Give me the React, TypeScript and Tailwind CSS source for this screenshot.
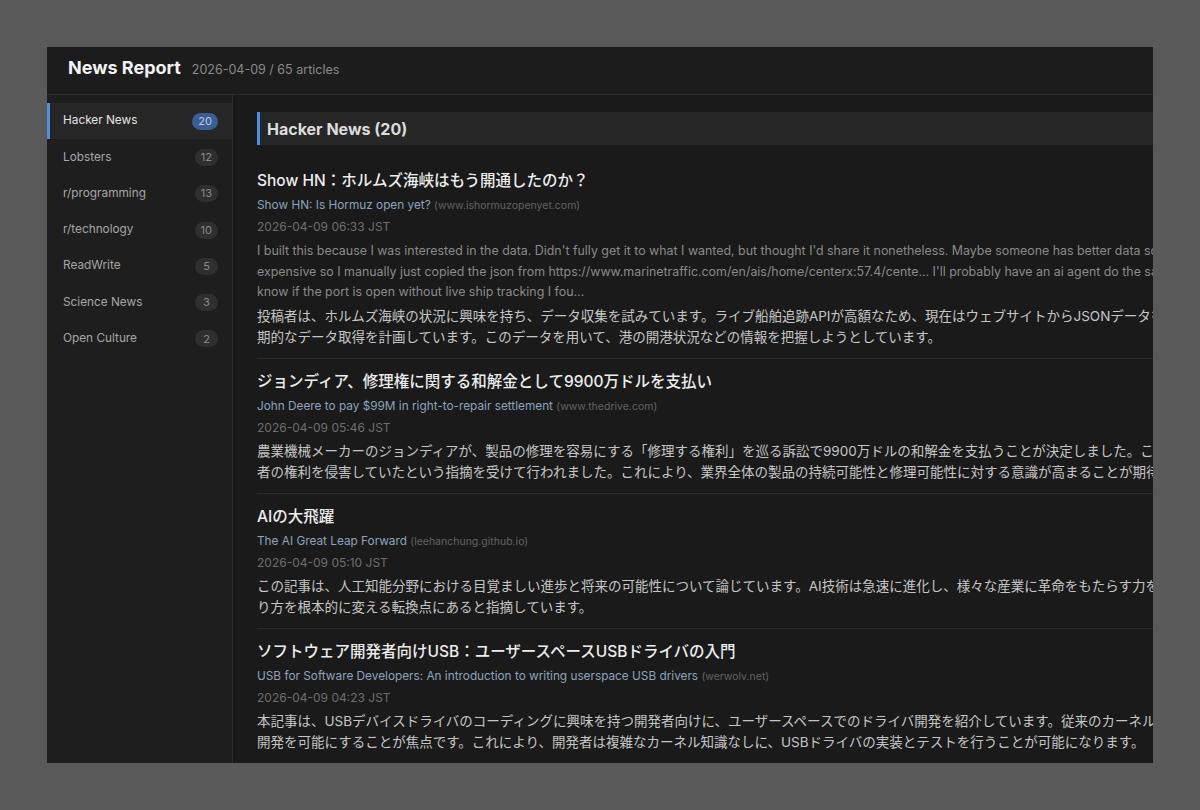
import React from "react";

type Source = { name: string; count: number };

const sources: Source[] = [
  { name: "Hacker News", count: 20 },
  { name: "Lobsters", count: 12 },
  { name: "r/programming", count: 13 },
  { name: "r/technology", count: 10 },
  { name: "ReadWrite", count: 5 },
  { name: "Science News", count: 3 },
  { name: "Open Culture", count: 2 },
];

type Article = {
  title: string;
  original: string;
  domain: string;
  date: string;
  excerpt?: string[];
  summary: string[];
};

const articles: Article[] = [
  {
    title: "Show HN：ホルムズ海峡はもう開通したのか？",
    original: "Show HN: Is Hormuz open yet?",
    domain: "www.ishormuzopenyet.com",
    date: "2026-04-09 06:33 JST",
    excerpt: [
      "I built this because I was interested in the data. Didn't fully get it to what I wanted, but thought I'd share it nonetheless. Maybe someone has better data sources for this, the APIs are",
      "expensive so I manually just copied the json from https://www.marinetraffic.com/en/ais/home/centerx:57.4/cente... I'll probably have an ai agent do the same thing periodically, since it's hard to",
      "know if the port is open without live ship tracking I fou...",
    ],
    summary: [
      "投稿者は、ホルムズ海峡の状況に興味を持ち、データ収集を試みています。ライブ船舶追跡APIが高額なため、現在はウェブサイトからJSONデータを手動でコピーしており、今後はAIエージェントによる定",
      "期的なデータ取得を計画しています。このデータを用いて、港の開港状況などの情報を把握しようとしています。",
    ],
  },
  {
    title: "ジョンディア、修理権に関する和解金として9900万ドルを支払い",
    original: "John Deere to pay $99M in right-to-repair settlement",
    domain: "www.thedrive.com",
    date: "2026-04-09 05:46 JST",
    summary: [
      "農業機械メーカーのジョンディアが、製品の修理を容易にする「修理する権利」を巡る訴訟で9900万ドルの和解金を支払うことが決定しました。この和解は、同社が修理を制限し消費",
      "者の権利を侵害していたという指摘を受けて行われました。これにより、業界全体の製品の持続可能性と修理可能性に対する意識が高まることが期待されています。",
    ],
  },
  {
    title: "AIの大飛躍",
    original: "The AI Great Leap Forward",
    domain: "leehanchung.github.io",
    date: "2026-04-09 05:10 JST",
    summary: [
      "この記事は、人工知能分野における目覚ましい進歩と将来の可能性について論じています。AI技術は急速に進化し、様々な産業に革命をもたらす力を持っており、社会や経済のあ",
      "り方を根本的に変える転換点にあると指摘しています。",
    ],
  },
  {
    title: "ソフトウェア開発者向けUSB：ユーザースペースUSBドライバの入門",
    original: "USB for Software Developers: An introduction to writing userspace USB drivers",
    domain: "werwolv.net",
    date: "2026-04-09 04:23 JST",
    summary: [
      "本記事は、USBデバイスドライバのコーディングに興味を持つ開発者向けに、ユーザースペースでのドライバ開発を紹介しています。従来のカーネル空間ではなく、より手軽なドライバ",
      "開発を可能にすることが焦点です。これにより、開発者は複雑なカーネル知識なしに、USBドライバの実装とテストを行うことが可能になります。",
    ],
  },
];

const font = {
  fontFamily: 'Inter, "Noto Sans CJK JP", "Noto Sans", sans-serif',
};

function SidebarItem({ source, active }: { source: Source; active: boolean }) {
  return (
    <div
      className={
        active
          ? "flex h-[36.3px] items-center justify-between border-l-[3px] border-[#4f8fe6] bg-[#262626] pl-[13px] pr-[14px]"
          : "flex h-[36.3px] items-center justify-between border-l-[3px] border-transparent pl-[13px] pr-[14px]"
      }
    >
      <span className={active ? "text-[11.8px] text-[#e4e4e4]" : "text-[11.8px] text-[#a6a6a6]"}>
        {source.name}
      </span>
      <span
        className={
          active
            ? "flex h-[17px] min-w-[25px] items-center justify-center rounded-full bg-[#3c5d94] px-[6px] text-[11px] text-[#b9c9e6]"
            : "flex h-[17px] min-w-[23px] items-center justify-center rounded-full bg-[#2f2f2f] px-[6px] text-[11px] text-[#8a8a8a]"
        }
      >
        {source.count}
      </span>
    </div>
  );
}

function ArticleItem({ article }: { article: Article }) {
  return (
    <div className="border-b border-[#2b2b2b] pb-[10px] pt-[12px]">
      <div className="whitespace-nowrap text-[15.5px] font-medium leading-[22px] text-[#ededed]">
        {article.title}
      </div>
      <div className="mt-[3px] whitespace-nowrap text-[11.8px] leading-[20px] text-[#8ea2be]">
        {article.original}{" "}
        <span className="text-[10.5px] text-[#626262]">({article.domain})</span>
      </div>
      <div className="mt-[1px] text-[12px] leading-[20px] text-[#6e6e6e]">{article.date}</div>
      {article.excerpt && (
        <div className="mt-[4px] text-[12.4px] leading-[20.5px] text-[#8a8a8a]">
          {article.excerpt.map((line, i) => (
            <div key={i} className="whitespace-nowrap">
              {line}
            </div>
          ))}
        </div>
      )}
      <div className="mt-[3px] text-[13.5px] leading-[21px] text-[#c6c6c6]">
        {article.summary.map((line, i) => (
          <div key={i} className="whitespace-nowrap">
            {line}
          </div>
        ))}
      </div>
    </div>
  );
}

export default function App() {
  return (
    <div className="h-[810px] w-[1200px] bg-[#5a5a5a] p-[47px]" style={font}>
      <div className="flex h-[716px] w-[1106px] flex-col overflow-hidden bg-[#1a1a1a]">
        {/* top bar */}
        <header className="flex h-[48px] shrink-0 items-baseline gap-[11px] border-b border-[#2c2c2c] bg-[#1c1c1c] pl-[21px] pt-[7px]">
          <h1 className="text-[18px] font-bold text-[#f2f2f2]">News Report</h1>
          <span className="text-[12.5px] text-[#8a8a8a]">2026-04-09 / 65 articles</span>
        </header>

        <div className="flex min-h-0 flex-1">
          {/* source list */}
          <aside className="w-[186px] shrink-0 border-r border-[#2c2c2c] bg-[#1e1e1e] pt-[8px]">
            {sources.map((s, i) => (
              <SidebarItem key={s.name} source={s} active={i === 0} />
            ))}
          </aside>

          {/* article feed */}
          <main className="min-w-0 flex-1 overflow-hidden pl-[24px] pt-[17px]">
            <div className="w-[1200px]">
              <h2 className="mb-[13px] flex h-[33px] items-center border-l-[3px] border-[#4f8fe6] bg-[#262626] pl-[7px] text-[16px] font-bold text-[#dcdcdc]">
                Hacker News (20)
              </h2>
              {articles.map((a) => (
                <ArticleItem key={a.title} article={a} />
              ))}
            </div>
          </main>
        </div>
      </div>
    </div>
  );
}
